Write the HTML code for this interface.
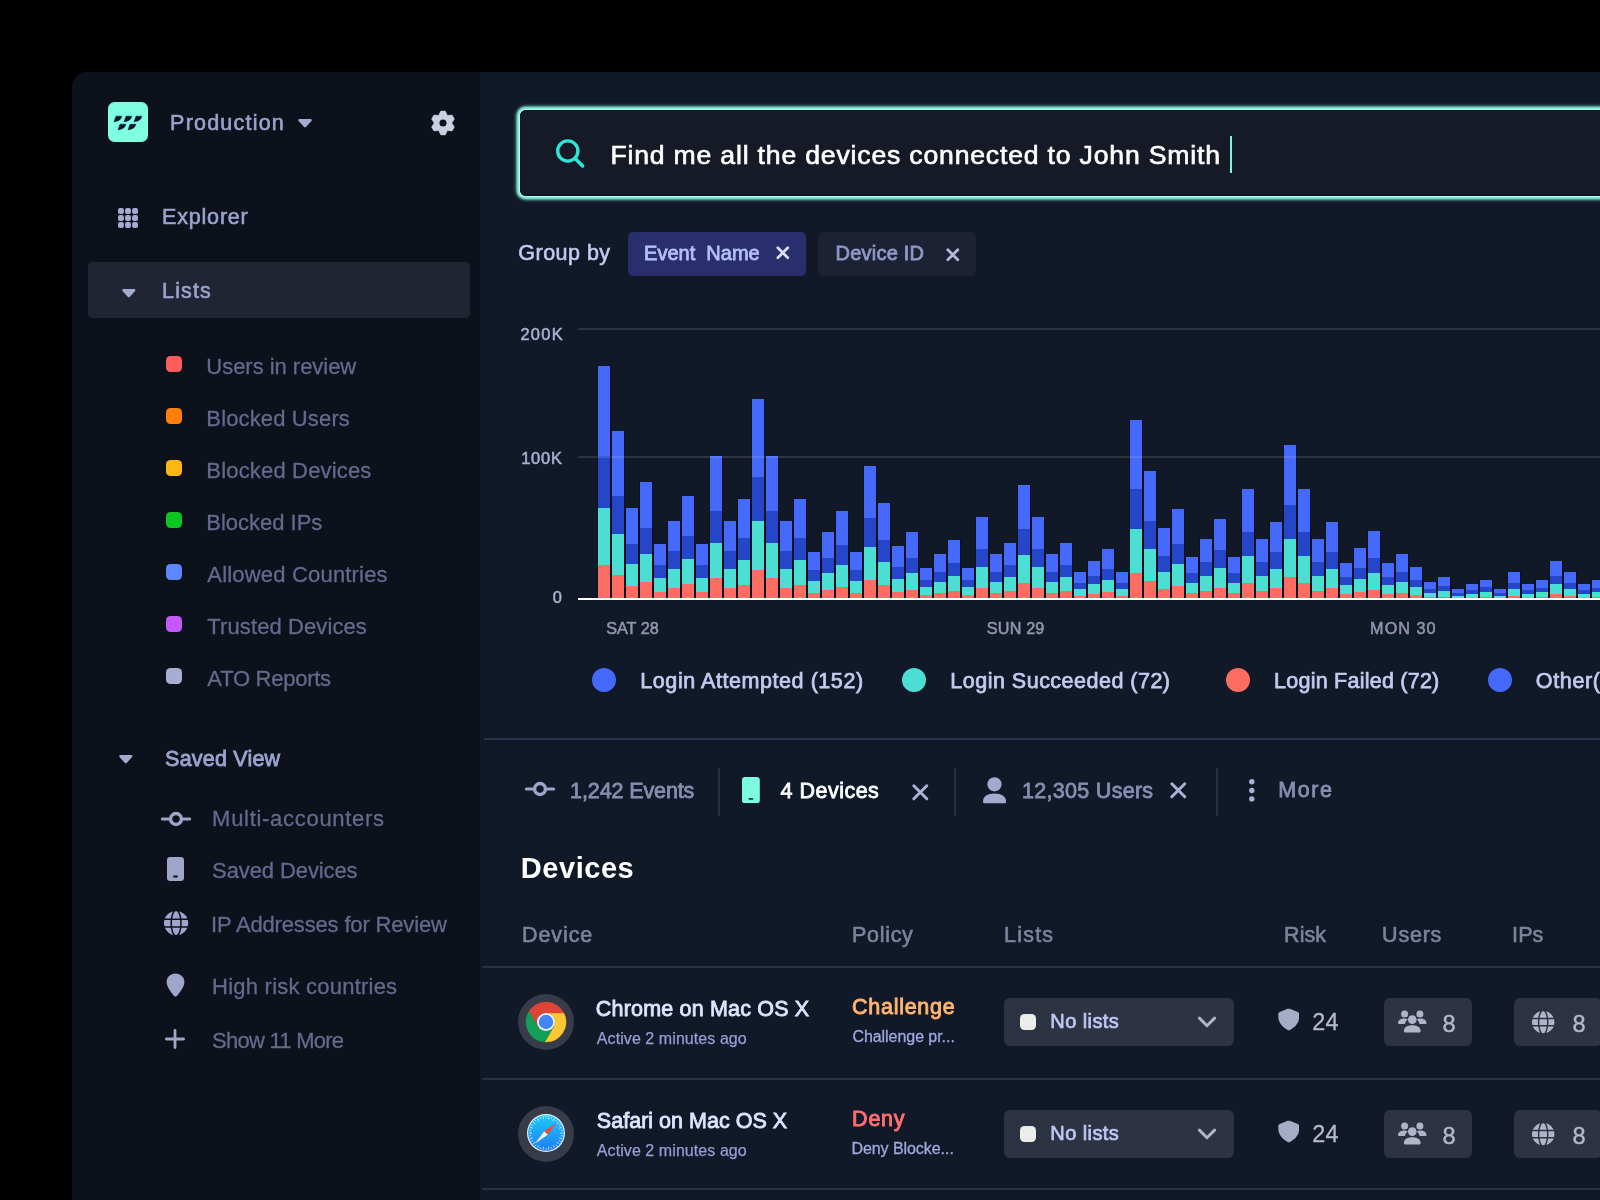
<!DOCTYPE html>
<html lang="en">
<head>
<meta charset="utf-8">
<title>Explorer – Devices</title>
<style>
html,body{margin:0;padding:0;background:#000;}
body{width:1600px;height:1200px;overflow:hidden;position:relative;font-family:"Liberation Sans", sans-serif;-webkit-font-smoothing:antialiased;}
.abs{position:absolute;display:block;}
.win{position:absolute;left:72px;top:72px;width:1600px;height:1200px;border-top-left-radius:16px;background:#111827;overflow:hidden;}
.side{position:absolute;left:0;top:0;width:408px;height:1200px;background:#0c111b;}
.txt{position:absolute;left:0;top:0;width:1600px;height:1200px;will-change:transform;}
.t{position:absolute;white-space:pre;font-family:"Liberation Sans", sans-serif;paint-order:stroke fill;}
</style>
</head>
<body>
<div class="win"><div class="side"></div></div>
<div class="abs" style="left:108px;top:102px;width:40px;height:40px;border-radius:6.5px;background:#80ffe0"></div>
<svg class="abs" style="left:108px;top:102px" width="40" height="40" viewBox="0 0 40 40" ><g fill="#0a1631" stroke="#0a1631" stroke-width="0.5" stroke-linejoin="round"><path d="M8.0 14.2 L13.9 14.2 Q12.6 19.3 6.0 19.8 Z"/><path d="M18.0 14.2 L23.9 14.2 Q22.6 19.3 16.0 19.8 Z"/><path d="M28.0 14.2 L33.9 14.2 Q32.6 19.3 26.0 19.8 Z"/><path d="M12.0 22.2 L17.9 22.2 Q16.6 27.3 10.0 27.8 Z"/><path d="M22.0 22.2 L27.9 22.2 Q26.6 27.3 20.0 27.8 Z"/></g></svg>
<svg class="abs" style="left:297.2px;top:118.2px" width="16" height="10.4" viewBox="-8.0 -5.2 16 10.4" ><path d="M-5.6 -3.0 L5.6 -3.0 L0 3.0 Z" fill="#a4abcf" stroke="#a4abcf" stroke-width="2.4" stroke-linejoin="round"/></svg>
<svg class="abs" style="left:429.4px;top:109.0px" width="28" height="28" viewBox="-14 -14 28 28" ><path d="M3.92 -8.60 L2.67 -11.13 Q2.60 -11.72 1.99 -11.88 L-1.99 -11.88 Q-2.60 -11.72 -2.67 -11.13 L-3.92 -8.60 Q-4.17 -7.23 -5.49 -7.69 L-5.49 -7.69 L-8.31 -7.88 Q-8.85 -8.11 -9.30 -7.66 L-11.29 -4.22 Q-11.44 -3.61 -10.98 -3.25 L-9.41 -0.91 Q-8.35 -0.00 -9.41 0.91 L-9.41 0.91 L-10.98 3.25 Q-11.44 3.61 -11.29 4.22 L-9.30 7.66 Q-8.85 8.11 -8.31 7.88 L-5.49 7.69 Q-4.18 7.23 -3.92 8.60 L-3.92 8.60 L-2.67 11.13 Q-2.60 11.72 -1.99 11.88 L1.99 11.88 Q2.60 11.72 2.67 11.13 L3.92 8.60 Q4.18 7.23 5.49 7.69 L5.49 7.69 L8.31 7.88 Q8.85 8.11 9.30 7.66 L11.29 4.22 Q11.44 3.61 10.98 3.25 L9.41 0.91 Q8.35 0.00 9.41 -0.91 L9.41 -0.91 L10.98 -3.25 Q11.44 -3.61 11.29 -4.22 L9.30 -7.66 Q8.85 -8.11 8.31 -7.88 L5.49 -7.69 Q4.17 -7.23 3.92 -8.60 Z" fill="#cbcfe1" stroke="#cbcfe1" stroke-width="0.5" stroke-linejoin="round"/><circle r="3.55" fill="#0c111b"/></svg>
<svg class="abs" style="left:118px;top:208px" width="20" height="20" viewBox="0 0 20 20" ><rect x="0.00" y="0.00" width="5.9" height="5.9" rx="1.9" fill="#a6acd0"/><rect x="7.05" y="0.00" width="5.9" height="5.9" rx="1.9" fill="#a6acd0"/><rect x="14.10" y="0.00" width="5.9" height="5.9" rx="1.9" fill="#a6acd0"/><rect x="0.00" y="7.05" width="5.9" height="5.9" rx="1.9" fill="#a6acd0"/><rect x="7.05" y="7.05" width="5.9" height="5.9" rx="1.9" fill="#a6acd0"/><rect x="14.10" y="7.05" width="5.9" height="5.9" rx="1.9" fill="#a6acd0"/><rect x="0.00" y="14.10" width="5.9" height="5.9" rx="1.9" fill="#a6acd0"/><rect x="7.05" y="14.10" width="5.9" height="5.9" rx="1.9" fill="#a6acd0"/><rect x="14.10" y="14.10" width="5.9" height="5.9" rx="1.9" fill="#a6acd0"/></svg>
<div class="abs" style="left:88px;top:262px;width:382px;height:56px;border-radius:4.5px;background:#212433"></div>
<svg class="abs" style="left:121.39999999999999px;top:288.0px" width="15.6" height="10.4" viewBox="-7.8 -5.2 15.6 10.4" ><path d="M-5.4 -3.0 L5.4 -3.0 L0 3.0 Z" fill="#a4abcf" stroke="#a4abcf" stroke-width="2.4" stroke-linejoin="round"/></svg>
<div class="abs" style="left:166px;top:356px;width:16px;height:16px;border-radius:4.5px;background:#ff5d5d"></div>
<div class="abs" style="left:166px;top:408px;width:16px;height:16px;border-radius:4.5px;background:#ff7f0a"></div>
<div class="abs" style="left:166px;top:460px;width:16px;height:16px;border-radius:4.5px;background:#ffb80f"></div>
<div class="abs" style="left:166px;top:512px;width:16px;height:16px;border-radius:4.5px;background:#0cc520"></div>
<div class="abs" style="left:166px;top:564px;width:16px;height:16px;border-radius:4.5px;background:#5e86ff"></div>
<div class="abs" style="left:166px;top:616px;width:16px;height:16px;border-radius:4.5px;background:#c558fb"></div>
<div class="abs" style="left:166px;top:668px;width:16px;height:16px;border-radius:4.5px;background:#a7aed2"></div>
<svg class="abs" style="left:118.4px;top:754.1999999999999px" width="15.6" height="10.4" viewBox="-7.8 -5.2 15.6 10.4" ><path d="M-5.4 -3.0 L5.4 -3.0 L0 3.0 Z" fill="#a4abcf" stroke="#a4abcf" stroke-width="2.4" stroke-linejoin="round"/></svg>
<svg class="abs" style="left:160px;top:809.8px" width="32" height="18" viewBox="-16 -9 32 18" ><path d="M-13.6 0 H-7 M7 0 H13.6" stroke="#a0a6c9" stroke-width="3.1" stroke-linecap="round"/><circle cx="0" cy="0" r="5.45" fill="none" stroke="#a0a6c9" stroke-width="3.4"/></svg>
<svg class="abs" style="left:167px;top:857px" width="17" height="24" viewBox="0 0 17 24" ><rect x="0" y="0" width="17" height="24" rx="3.2" fill="#a0a6c9"/><rect x="6.1" y="18.6" width="4.8" height="1.8" rx="0.7" fill="#0c111b"/></svg>
<svg class="abs" style="left:162.9px;top:909.6999999999999px" width="26.2" height="26.2" viewBox="-13.1 -13.1 26.2 26.2" ><circle cx="0" cy="0" r="12.1" fill="#a0a6c9"/><g fill="none" stroke="#0c111b" stroke-width="1.56"><ellipse cx="0" cy="0" rx="4.94" ry="12.90"/><path d="M-12.1 -3.93 H12.1 M-12.1 3.93 H12.1"/></g></svg>
<svg class="abs" style="left:166.1px;top:972.9px" width="19" height="25" viewBox="0 0 19 25" ><path d="M9.5 0.4 C4.4 0.4 0.6 4.2 0.6 9.1 C0.6 13.2 3.6 17.4 7.6 22.6 Q9.5 24.9 11.4 22.6 C15.4 17.4 18.4 13.2 18.4 9.1 C18.4 4.2 14.6 0.4 9.5 0.4 Z" fill="#a0a6c9"/></svg>
<svg class="abs" style="left:164.3px;top:1028px" width="22" height="22" viewBox="-11 -11 22 22" ><path d="M-8.6 0 H8.6 M0 -8.6 V8.6" stroke="#a0a6c9" stroke-width="2.8" stroke-linecap="round"/></svg>
<div class="abs" style="left:520px;top:110px;width:1200px;height:86px;border-radius:6px;background:#161a26;box-shadow:inset 0 0 0 1px #04161d, 0 0 0 1.1px #a6fff0, 0 0 2px 2.2px #8eeadb, 0 0 3.5px 4px rgba(125,232,212,0.7)"></div>
<svg class="abs" style="left:552px;top:135px" width="36" height="36" viewBox="552 135 36 36" ><circle cx="567.8" cy="151" r="10.1" fill="none" stroke="#2fe6d6" stroke-width="3.4"/><path d="M575.4 158.7 L582.6 165.9" stroke="#2fe6d6" stroke-width="3.6" stroke-linecap="round"/></svg>
<div class="abs" style="left:1230px;top:135.5px;width:2px;height:37px;background:#7ff3dc"></div>
<div class="abs" style="left:628px;top:232px;width:178px;height:44px;border-radius:5px;background:#282f6c"></div>
<div class="abs" style="left:818px;top:232px;width:158px;height:44px;border-radius:5px;background:#1c2133"></div>
<svg class="abs" style="left:775.4000000000001px;top:245.0px" width="15.6" height="15.6" viewBox="-7.8 -7.8 15.6 15.6" ><path d="M-5.0 -5.0 L5.0 5.0 M5.0 -5.0 L-5.0 5.0" stroke="#dde0ee" stroke-width="2.7" stroke-linecap="round" fill="none"/></svg>
<svg class="abs" style="left:945.2px;top:246.79999999999998px" width="15.6" height="15.6" viewBox="-7.8 -7.8 15.6 15.6" ><path d="M-5.0 -5.0 L5.0 5.0 M5.0 -5.0 L-5.0 5.0" stroke="#b3b9d8" stroke-width="2.8" stroke-linecap="round" fill="none"/></svg>
<svg class="abs" style="left:0;top:0" width="1600" height="700" viewBox="0 0 1600 700" shape-rendering="crispEdges">
<g fill="#0a0f1d"><rect x="597" y="365.75" width="14" height="234.25"/><rect x="611" y="431.25" width="14" height="168.75"/><rect x="625" y="508.00" width="14" height="92.00"/><rect x="639" y="482.25" width="14" height="117.75"/><rect x="653" y="543.75" width="14" height="56.25"/><rect x="667" y="520.75" width="14" height="79.25"/><rect x="681" y="496.25" width="14" height="103.75"/><rect x="695" y="543.75" width="14" height="56.25"/><rect x="709" y="455.50" width="14" height="144.50"/><rect x="723" y="520.75" width="14" height="79.25"/><rect x="737" y="499.00" width="14" height="101.00"/><rect x="751" y="399.25" width="14" height="200.75"/><rect x="765" y="455.50" width="14" height="144.50"/><rect x="779" y="520.75" width="14" height="79.25"/><rect x="793" y="499.00" width="14" height="101.00"/><rect x="807" y="551.50" width="14" height="48.50"/><rect x="821" y="532.25" width="14" height="67.75"/><rect x="835" y="510.50" width="14" height="89.50"/><rect x="849" y="551.50" width="14" height="48.50"/><rect x="863" y="465.75" width="14" height="134.25"/><rect x="877" y="503.00" width="14" height="97.00"/><rect x="891" y="546.25" width="14" height="53.75"/><rect x="905" y="532.25" width="14" height="67.75"/><rect x="919" y="568.00" width="14" height="32.00"/><rect x="933" y="554.00" width="14" height="46.00"/><rect x="947" y="540.00" width="14" height="60.00"/><rect x="961" y="568.00" width="14" height="32.00"/><rect x="975" y="517.00" width="14" height="83.00"/><rect x="989" y="554.00" width="14" height="46.00"/><rect x="1003" y="542.50" width="14" height="57.50"/><rect x="1017" y="485.00" width="14" height="115.00"/><rect x="1031" y="517.00" width="14" height="83.00"/><rect x="1045" y="554.00" width="14" height="46.00"/><rect x="1059" y="542.50" width="14" height="57.50"/><rect x="1073" y="572.00" width="14" height="28.00"/><rect x="1087" y="560.50" width="14" height="39.50"/><rect x="1101" y="549.00" width="14" height="51.00"/><rect x="1115" y="572.00" width="14" height="28.00"/><rect x="1129" y="420.00" width="14" height="180.00"/><rect x="1143" y="471.00" width="14" height="129.00"/><rect x="1157" y="528.25" width="14" height="71.75"/><rect x="1171" y="509.25" width="14" height="90.75"/><rect x="1185" y="556.50" width="14" height="43.50"/><rect x="1199" y="538.50" width="14" height="61.50"/><rect x="1213" y="519.25" width="14" height="80.75"/><rect x="1227" y="556.50" width="14" height="43.50"/><rect x="1241" y="489.00" width="14" height="111.00"/><rect x="1255" y="538.50" width="14" height="61.50"/><rect x="1269" y="522.00" width="14" height="78.00"/><rect x="1283" y="445.25" width="14" height="154.75"/><rect x="1297" y="489.00" width="14" height="111.00"/><rect x="1311" y="538.50" width="14" height="61.50"/><rect x="1325" y="522.00" width="14" height="78.00"/><rect x="1339" y="563.00" width="14" height="37.00"/><rect x="1353" y="547.50" width="14" height="52.50"/><rect x="1367" y="531.00" width="14" height="69.00"/><rect x="1381" y="563.00" width="14" height="37.00"/><rect x="1395" y="554.00" width="14" height="46.00"/><rect x="1409" y="566.75" width="14" height="33.25"/><rect x="1423" y="582.00" width="14" height="18.00"/><rect x="1437" y="577.00" width="14" height="23.00"/><rect x="1451" y="589.00" width="14" height="11.00"/><rect x="1465" y="584.25" width="14" height="15.75"/><rect x="1479" y="579.50" width="14" height="20.50"/><rect x="1493" y="589.00" width="14" height="11.00"/><rect x="1507" y="571.50" width="14" height="28.50"/><rect x="1521" y="584.25" width="14" height="15.75"/><rect x="1535" y="580.00" width="14" height="20.00"/><rect x="1549" y="560.50" width="14" height="39.50"/><rect x="1563" y="571.50" width="14" height="28.50"/><rect x="1577" y="584.25" width="14" height="15.75"/><rect x="1591" y="580.00" width="14" height="20.00"/></g>
<g><rect x="598" y="365.75" width="12" height="90.42" fill="#4569fb"/><rect x="598" y="456.17" width="12" height="51.54" fill="#2546c9"/><rect x="598" y="507.71" width="12" height="57.16" fill="#4bded3"/><rect x="598" y="564.86" width="12" height="35.14" fill="#fd6d61"/><rect x="612" y="431.25" width="12" height="65.14" fill="#4569fb"/><rect x="612" y="496.39" width="12" height="37.12" fill="#2546c9"/><rect x="612" y="533.51" width="12" height="41.17" fill="#4bded3"/><rect x="612" y="574.69" width="12" height="25.31" fill="#fd6d61"/><rect x="626" y="508.00" width="12" height="35.51" fill="#4569fb"/><rect x="626" y="543.51" width="12" height="20.24" fill="#2546c9"/><rect x="626" y="563.75" width="12" height="22.45" fill="#4bded3"/><rect x="626" y="586.20" width="12" height="13.80" fill="#fd6d61"/><rect x="640" y="482.25" width="12" height="45.45" fill="#4569fb"/><rect x="640" y="527.70" width="12" height="25.91" fill="#2546c9"/><rect x="640" y="553.61" width="12" height="28.73" fill="#4bded3"/><rect x="640" y="582.34" width="12" height="17.66" fill="#fd6d61"/><rect x="654" y="543.75" width="12" height="21.71" fill="#4569fb"/><rect x="654" y="565.46" width="12" height="12.38" fill="#2546c9"/><rect x="654" y="577.84" width="12" height="13.72" fill="#4bded3"/><rect x="654" y="591.56" width="12" height="8.44" fill="#fd6d61"/><rect x="668" y="520.75" width="12" height="30.59" fill="#4569fb"/><rect x="668" y="551.34" width="12" height="17.43" fill="#2546c9"/><rect x="668" y="568.78" width="12" height="19.34" fill="#4bded3"/><rect x="668" y="588.11" width="12" height="11.89" fill="#fd6d61"/><rect x="682" y="496.25" width="12" height="40.05" fill="#4569fb"/><rect x="682" y="536.30" width="12" height="22.82" fill="#2546c9"/><rect x="682" y="559.12" width="12" height="25.31" fill="#4bded3"/><rect x="682" y="584.44" width="12" height="15.56" fill="#fd6d61"/><rect x="696" y="543.75" width="12" height="21.71" fill="#4569fb"/><rect x="696" y="565.46" width="12" height="12.38" fill="#2546c9"/><rect x="696" y="577.84" width="12" height="13.72" fill="#4bded3"/><rect x="696" y="591.56" width="12" height="8.44" fill="#fd6d61"/><rect x="710" y="455.50" width="12" height="55.78" fill="#4569fb"/><rect x="710" y="511.28" width="12" height="31.79" fill="#2546c9"/><rect x="710" y="543.07" width="12" height="35.26" fill="#4bded3"/><rect x="710" y="578.33" width="12" height="21.67" fill="#fd6d61"/><rect x="724" y="520.75" width="12" height="30.59" fill="#4569fb"/><rect x="724" y="551.34" width="12" height="17.43" fill="#2546c9"/><rect x="724" y="568.78" width="12" height="19.34" fill="#4bded3"/><rect x="724" y="588.11" width="12" height="11.89" fill="#fd6d61"/><rect x="738" y="499.00" width="12" height="38.99" fill="#4569fb"/><rect x="738" y="537.99" width="12" height="22.22" fill="#2546c9"/><rect x="738" y="560.21" width="12" height="24.64" fill="#4bded3"/><rect x="738" y="584.85" width="12" height="15.15" fill="#fd6d61"/><rect x="752" y="399.25" width="12" height="77.49" fill="#4569fb"/><rect x="752" y="476.74" width="12" height="44.16" fill="#2546c9"/><rect x="752" y="520.90" width="12" height="48.98" fill="#4bded3"/><rect x="752" y="569.89" width="12" height="30.11" fill="#fd6d61"/><rect x="766" y="455.50" width="12" height="55.78" fill="#4569fb"/><rect x="766" y="511.28" width="12" height="31.79" fill="#2546c9"/><rect x="766" y="543.07" width="12" height="35.26" fill="#4bded3"/><rect x="766" y="578.33" width="12" height="21.67" fill="#fd6d61"/><rect x="780" y="520.75" width="12" height="30.59" fill="#4569fb"/><rect x="780" y="551.34" width="12" height="17.43" fill="#2546c9"/><rect x="780" y="568.78" width="12" height="19.34" fill="#4bded3"/><rect x="780" y="588.11" width="12" height="11.89" fill="#fd6d61"/><rect x="794" y="499.00" width="12" height="38.99" fill="#4569fb"/><rect x="794" y="537.99" width="12" height="22.22" fill="#2546c9"/><rect x="794" y="560.21" width="12" height="24.64" fill="#4bded3"/><rect x="794" y="584.85" width="12" height="15.15" fill="#fd6d61"/><rect x="808" y="551.50" width="12" height="18.72" fill="#4569fb"/><rect x="808" y="570.22" width="12" height="10.67" fill="#2546c9"/><rect x="808" y="580.89" width="12" height="11.83" fill="#4bded3"/><rect x="808" y="592.72" width="12" height="7.28" fill="#fd6d61"/><rect x="822" y="532.25" width="12" height="26.15" fill="#4569fb"/><rect x="822" y="558.40" width="12" height="14.90" fill="#2546c9"/><rect x="822" y="573.31" width="12" height="16.53" fill="#4bded3"/><rect x="822" y="589.84" width="12" height="10.16" fill="#fd6d61"/><rect x="836" y="510.50" width="12" height="34.55" fill="#4569fb"/><rect x="836" y="545.05" width="12" height="19.69" fill="#2546c9"/><rect x="836" y="564.74" width="12" height="21.84" fill="#4bded3"/><rect x="836" y="586.58" width="12" height="13.42" fill="#fd6d61"/><rect x="850" y="551.50" width="12" height="18.72" fill="#4569fb"/><rect x="850" y="570.22" width="12" height="10.67" fill="#2546c9"/><rect x="850" y="580.89" width="12" height="11.83" fill="#4bded3"/><rect x="850" y="592.72" width="12" height="7.28" fill="#fd6d61"/><rect x="864" y="465.75" width="12" height="51.82" fill="#4569fb"/><rect x="864" y="517.57" width="12" height="29.54" fill="#2546c9"/><rect x="864" y="547.11" width="12" height="32.76" fill="#4bded3"/><rect x="864" y="579.86" width="12" height="20.14" fill="#fd6d61"/><rect x="878" y="503.00" width="12" height="37.44" fill="#4569fb"/><rect x="878" y="540.44" width="12" height="21.34" fill="#2546c9"/><rect x="878" y="561.78" width="12" height="23.67" fill="#4bded3"/><rect x="878" y="585.45" width="12" height="14.55" fill="#fd6d61"/><rect x="892" y="546.25" width="12" height="20.75" fill="#4569fb"/><rect x="892" y="567.00" width="12" height="11.82" fill="#2546c9"/><rect x="892" y="578.82" width="12" height="13.12" fill="#4bded3"/><rect x="892" y="591.94" width="12" height="8.06" fill="#fd6d61"/><rect x="906" y="532.25" width="12" height="26.15" fill="#4569fb"/><rect x="906" y="558.40" width="12" height="14.90" fill="#2546c9"/><rect x="906" y="573.31" width="12" height="16.53" fill="#4bded3"/><rect x="906" y="589.84" width="12" height="10.16" fill="#fd6d61"/><rect x="920" y="568.00" width="12" height="12.35" fill="#4569fb"/><rect x="920" y="580.35" width="12" height="7.04" fill="#2546c9"/><rect x="920" y="587.39" width="12" height="7.81" fill="#4bded3"/><rect x="920" y="595.20" width="12" height="4.80" fill="#fd6d61"/><rect x="934" y="554.00" width="12" height="17.76" fill="#4569fb"/><rect x="934" y="571.76" width="12" height="10.12" fill="#2546c9"/><rect x="934" y="581.88" width="12" height="11.22" fill="#4bded3"/><rect x="934" y="593.10" width="12" height="6.90" fill="#fd6d61"/><rect x="948" y="540.00" width="12" height="23.16" fill="#4569fb"/><rect x="948" y="563.16" width="12" height="13.20" fill="#2546c9"/><rect x="948" y="576.36" width="12" height="14.64" fill="#4bded3"/><rect x="948" y="591.00" width="12" height="9.00" fill="#fd6d61"/><rect x="962" y="568.00" width="12" height="12.35" fill="#4569fb"/><rect x="962" y="580.35" width="12" height="7.04" fill="#2546c9"/><rect x="962" y="587.39" width="12" height="7.81" fill="#4bded3"/><rect x="962" y="595.20" width="12" height="4.80" fill="#fd6d61"/><rect x="976" y="517.00" width="12" height="32.04" fill="#4569fb"/><rect x="976" y="549.04" width="12" height="18.26" fill="#2546c9"/><rect x="976" y="567.30" width="12" height="20.25" fill="#4bded3"/><rect x="976" y="587.55" width="12" height="12.45" fill="#fd6d61"/><rect x="990" y="554.00" width="12" height="17.76" fill="#4569fb"/><rect x="990" y="571.76" width="12" height="10.12" fill="#2546c9"/><rect x="990" y="581.88" width="12" height="11.22" fill="#4bded3"/><rect x="990" y="593.10" width="12" height="6.90" fill="#fd6d61"/><rect x="1004" y="542.50" width="12" height="22.20" fill="#4569fb"/><rect x="1004" y="564.70" width="12" height="12.65" fill="#2546c9"/><rect x="1004" y="577.35" width="12" height="14.03" fill="#4bded3"/><rect x="1004" y="591.38" width="12" height="8.63" fill="#fd6d61"/><rect x="1018" y="485.00" width="12" height="44.39" fill="#4569fb"/><rect x="1018" y="529.39" width="12" height="25.30" fill="#2546c9"/><rect x="1018" y="554.69" width="12" height="28.06" fill="#4bded3"/><rect x="1018" y="582.75" width="12" height="17.25" fill="#fd6d61"/><rect x="1032" y="517.00" width="12" height="32.04" fill="#4569fb"/><rect x="1032" y="549.04" width="12" height="18.26" fill="#2546c9"/><rect x="1032" y="567.30" width="12" height="20.25" fill="#4bded3"/><rect x="1032" y="587.55" width="12" height="12.45" fill="#fd6d61"/><rect x="1046" y="554.00" width="12" height="17.76" fill="#4569fb"/><rect x="1046" y="571.76" width="12" height="10.12" fill="#2546c9"/><rect x="1046" y="581.88" width="12" height="11.22" fill="#4bded3"/><rect x="1046" y="593.10" width="12" height="6.90" fill="#fd6d61"/><rect x="1060" y="542.50" width="12" height="22.20" fill="#4569fb"/><rect x="1060" y="564.70" width="12" height="12.65" fill="#2546c9"/><rect x="1060" y="577.35" width="12" height="14.03" fill="#4bded3"/><rect x="1060" y="591.38" width="12" height="8.63" fill="#fd6d61"/><rect x="1074" y="572.00" width="12" height="10.81" fill="#4569fb"/><rect x="1074" y="582.81" width="12" height="6.16" fill="#2546c9"/><rect x="1074" y="588.97" width="12" height="6.83" fill="#4bded3"/><rect x="1074" y="595.80" width="12" height="4.20" fill="#fd6d61"/><rect x="1088" y="560.50" width="12" height="15.25" fill="#4569fb"/><rect x="1088" y="575.75" width="12" height="8.69" fill="#2546c9"/><rect x="1088" y="584.44" width="12" height="9.64" fill="#4bded3"/><rect x="1088" y="594.08" width="12" height="5.93" fill="#fd6d61"/><rect x="1102" y="549.00" width="12" height="19.69" fill="#4569fb"/><rect x="1102" y="568.69" width="12" height="11.22" fill="#2546c9"/><rect x="1102" y="579.91" width="12" height="12.44" fill="#4bded3"/><rect x="1102" y="592.35" width="12" height="7.65" fill="#fd6d61"/><rect x="1116" y="572.00" width="12" height="10.81" fill="#4569fb"/><rect x="1116" y="582.81" width="12" height="6.16" fill="#2546c9"/><rect x="1116" y="588.97" width="12" height="6.83" fill="#4bded3"/><rect x="1116" y="595.80" width="12" height="4.20" fill="#fd6d61"/><rect x="1130" y="420.00" width="12" height="69.48" fill="#4569fb"/><rect x="1130" y="489.48" width="12" height="39.60" fill="#2546c9"/><rect x="1130" y="529.08" width="12" height="43.92" fill="#4bded3"/><rect x="1130" y="573.00" width="12" height="27.00" fill="#fd6d61"/><rect x="1144" y="471.00" width="12" height="49.79" fill="#4569fb"/><rect x="1144" y="520.79" width="12" height="28.38" fill="#2546c9"/><rect x="1144" y="549.17" width="12" height="31.48" fill="#4bded3"/><rect x="1144" y="580.65" width="12" height="19.35" fill="#fd6d61"/><rect x="1158" y="528.25" width="12" height="27.70" fill="#4569fb"/><rect x="1158" y="555.95" width="12" height="15.79" fill="#2546c9"/><rect x="1158" y="571.73" width="12" height="17.51" fill="#4bded3"/><rect x="1158" y="589.24" width="12" height="10.76" fill="#fd6d61"/><rect x="1172" y="509.25" width="12" height="35.03" fill="#4569fb"/><rect x="1172" y="544.28" width="12" height="19.96" fill="#2546c9"/><rect x="1172" y="564.24" width="12" height="22.14" fill="#4bded3"/><rect x="1172" y="586.39" width="12" height="13.61" fill="#fd6d61"/><rect x="1186" y="556.50" width="12" height="16.79" fill="#4569fb"/><rect x="1186" y="573.29" width="12" height="9.57" fill="#2546c9"/><rect x="1186" y="582.86" width="12" height="10.61" fill="#4bded3"/><rect x="1186" y="593.48" width="12" height="6.53" fill="#fd6d61"/><rect x="1200" y="538.50" width="12" height="23.74" fill="#4569fb"/><rect x="1200" y="562.24" width="12" height="13.53" fill="#2546c9"/><rect x="1200" y="575.77" width="12" height="15.01" fill="#4bded3"/><rect x="1200" y="590.77" width="12" height="9.22" fill="#fd6d61"/><rect x="1214" y="519.25" width="12" height="31.17" fill="#4569fb"/><rect x="1214" y="550.42" width="12" height="17.77" fill="#2546c9"/><rect x="1214" y="568.18" width="12" height="19.70" fill="#4bded3"/><rect x="1214" y="587.89" width="12" height="12.11" fill="#fd6d61"/><rect x="1228" y="556.50" width="12" height="16.79" fill="#4569fb"/><rect x="1228" y="573.29" width="12" height="9.57" fill="#2546c9"/><rect x="1228" y="582.86" width="12" height="10.61" fill="#4bded3"/><rect x="1228" y="593.48" width="12" height="6.53" fill="#fd6d61"/><rect x="1242" y="489.00" width="12" height="42.85" fill="#4569fb"/><rect x="1242" y="531.85" width="12" height="24.42" fill="#2546c9"/><rect x="1242" y="556.27" width="12" height="27.08" fill="#4bded3"/><rect x="1242" y="583.35" width="12" height="16.65" fill="#fd6d61"/><rect x="1256" y="538.50" width="12" height="23.74" fill="#4569fb"/><rect x="1256" y="562.24" width="12" height="13.53" fill="#2546c9"/><rect x="1256" y="575.77" width="12" height="15.01" fill="#4bded3"/><rect x="1256" y="590.77" width="12" height="9.22" fill="#fd6d61"/><rect x="1270" y="522.00" width="12" height="30.11" fill="#4569fb"/><rect x="1270" y="552.11" width="12" height="17.16" fill="#2546c9"/><rect x="1270" y="569.27" width="12" height="19.03" fill="#4bded3"/><rect x="1270" y="588.30" width="12" height="11.70" fill="#fd6d61"/><rect x="1284" y="445.25" width="12" height="59.73" fill="#4569fb"/><rect x="1284" y="504.98" width="12" height="34.05" fill="#2546c9"/><rect x="1284" y="539.03" width="12" height="37.76" fill="#4bded3"/><rect x="1284" y="576.79" width="12" height="23.21" fill="#fd6d61"/><rect x="1298" y="489.00" width="12" height="42.85" fill="#4569fb"/><rect x="1298" y="531.85" width="12" height="24.42" fill="#2546c9"/><rect x="1298" y="556.27" width="12" height="27.08" fill="#4bded3"/><rect x="1298" y="583.35" width="12" height="16.65" fill="#fd6d61"/><rect x="1312" y="538.50" width="12" height="23.74" fill="#4569fb"/><rect x="1312" y="562.24" width="12" height="13.53" fill="#2546c9"/><rect x="1312" y="575.77" width="12" height="15.01" fill="#4bded3"/><rect x="1312" y="590.77" width="12" height="9.22" fill="#fd6d61"/><rect x="1326" y="522.00" width="12" height="30.11" fill="#4569fb"/><rect x="1326" y="552.11" width="12" height="17.16" fill="#2546c9"/><rect x="1326" y="569.27" width="12" height="19.03" fill="#4bded3"/><rect x="1326" y="588.30" width="12" height="11.70" fill="#fd6d61"/><rect x="1340" y="563.00" width="12" height="14.28" fill="#4569fb"/><rect x="1340" y="577.28" width="12" height="8.14" fill="#2546c9"/><rect x="1340" y="585.42" width="12" height="9.03" fill="#4bded3"/><rect x="1340" y="594.45" width="12" height="5.55" fill="#fd6d61"/><rect x="1354" y="547.50" width="12" height="20.27" fill="#4569fb"/><rect x="1354" y="567.76" width="12" height="11.55" fill="#2546c9"/><rect x="1354" y="579.31" width="12" height="12.81" fill="#4bded3"/><rect x="1354" y="592.12" width="12" height="7.87" fill="#fd6d61"/><rect x="1368" y="531.00" width="12" height="26.63" fill="#4569fb"/><rect x="1368" y="557.63" width="12" height="15.18" fill="#2546c9"/><rect x="1368" y="572.81" width="12" height="16.84" fill="#4bded3"/><rect x="1368" y="589.65" width="12" height="10.35" fill="#fd6d61"/><rect x="1382" y="563.00" width="12" height="14.28" fill="#4569fb"/><rect x="1382" y="577.28" width="12" height="8.14" fill="#2546c9"/><rect x="1382" y="585.42" width="12" height="9.03" fill="#4bded3"/><rect x="1382" y="594.45" width="12" height="5.55" fill="#fd6d61"/><rect x="1396" y="554.00" width="12" height="17.76" fill="#4569fb"/><rect x="1396" y="571.76" width="12" height="10.12" fill="#2546c9"/><rect x="1396" y="581.88" width="12" height="11.22" fill="#4bded3"/><rect x="1396" y="593.10" width="12" height="6.90" fill="#fd6d61"/><rect x="1410" y="566.75" width="12" height="12.83" fill="#4569fb"/><rect x="1410" y="579.58" width="12" height="7.32" fill="#2546c9"/><rect x="1410" y="586.90" width="12" height="8.11" fill="#4bded3"/><rect x="1410" y="595.01" width="12" height="4.99" fill="#fd6d61"/><rect x="1424" y="582.00" width="12" height="6.95" fill="#4569fb"/><rect x="1424" y="588.95" width="12" height="3.96" fill="#2546c9"/><rect x="1424" y="592.91" width="12" height="4.39" fill="#4bded3"/><rect x="1424" y="597.30" width="12" height="2.70" fill="#fd6d61"/><rect x="1438" y="577.00" width="12" height="8.88" fill="#4569fb"/><rect x="1438" y="585.88" width="12" height="5.06" fill="#2546c9"/><rect x="1438" y="590.94" width="12" height="5.61" fill="#4bded3"/><rect x="1438" y="596.55" width="12" height="3.45" fill="#fd6d61"/><rect x="1452" y="589.00" width="12" height="4.25" fill="#4569fb"/><rect x="1452" y="593.25" width="12" height="2.42" fill="#2546c9"/><rect x="1452" y="595.67" width="12" height="2.68" fill="#4bded3"/><rect x="1452" y="598.35" width="12" height="1.65" fill="#fd6d61"/><rect x="1466" y="584.25" width="12" height="6.08" fill="#4569fb"/><rect x="1466" y="590.33" width="12" height="3.46" fill="#2546c9"/><rect x="1466" y="593.79" width="12" height="3.84" fill="#4bded3"/><rect x="1466" y="597.64" width="12" height="2.36" fill="#fd6d61"/><rect x="1480" y="579.50" width="12" height="7.91" fill="#4569fb"/><rect x="1480" y="587.41" width="12" height="4.51" fill="#2546c9"/><rect x="1480" y="591.92" width="12" height="5.00" fill="#4bded3"/><rect x="1480" y="596.92" width="12" height="3.08" fill="#fd6d61"/><rect x="1494" y="589.00" width="12" height="4.25" fill="#4569fb"/><rect x="1494" y="593.25" width="12" height="2.42" fill="#2546c9"/><rect x="1494" y="595.67" width="12" height="2.68" fill="#4bded3"/><rect x="1494" y="598.35" width="12" height="1.65" fill="#fd6d61"/><rect x="1508" y="571.50" width="12" height="11.00" fill="#4569fb"/><rect x="1508" y="582.50" width="12" height="6.27" fill="#2546c9"/><rect x="1508" y="588.77" width="12" height="6.95" fill="#4bded3"/><rect x="1508" y="595.72" width="12" height="4.28" fill="#fd6d61"/><rect x="1522" y="584.25" width="12" height="6.08" fill="#4569fb"/><rect x="1522" y="590.33" width="12" height="3.46" fill="#2546c9"/><rect x="1522" y="593.79" width="12" height="3.84" fill="#4bded3"/><rect x="1522" y="597.64" width="12" height="2.36" fill="#fd6d61"/><rect x="1536" y="580.00" width="12" height="7.72" fill="#4569fb"/><rect x="1536" y="587.72" width="12" height="4.40" fill="#2546c9"/><rect x="1536" y="592.12" width="12" height="4.88" fill="#4bded3"/><rect x="1536" y="597.00" width="12" height="3.00" fill="#fd6d61"/><rect x="1550" y="560.50" width="12" height="15.25" fill="#4569fb"/><rect x="1550" y="575.75" width="12" height="8.69" fill="#2546c9"/><rect x="1550" y="584.44" width="12" height="9.64" fill="#4bded3"/><rect x="1550" y="594.08" width="12" height="5.93" fill="#fd6d61"/><rect x="1564" y="571.50" width="12" height="11.00" fill="#4569fb"/><rect x="1564" y="582.50" width="12" height="6.27" fill="#2546c9"/><rect x="1564" y="588.77" width="12" height="6.95" fill="#4bded3"/><rect x="1564" y="595.72" width="12" height="4.28" fill="#fd6d61"/><rect x="1578" y="584.25" width="12" height="6.08" fill="#4569fb"/><rect x="1578" y="590.33" width="12" height="3.46" fill="#2546c9"/><rect x="1578" y="593.79" width="12" height="3.84" fill="#4bded3"/><rect x="1578" y="597.64" width="12" height="2.36" fill="#fd6d61"/><rect x="1592" y="580.00" width="12" height="7.72" fill="#4569fb"/><rect x="1592" y="587.72" width="12" height="4.40" fill="#2546c9"/><rect x="1592" y="592.12" width="12" height="4.88" fill="#4bded3"/><rect x="1592" y="597.00" width="12" height="3.00" fill="#fd6d61"/></g>
<rect x="578" y="328" width="1022" height="2" fill="#ffffff" opacity="0.115"/>
<rect x="578" y="456" width="1022" height="2" fill="#ffffff" opacity="0.115"/>
<rect x="578" y="597.75" width="1022" height="2.25" fill="#ffffff"/>
</svg>
<div class="abs" style="left:592px;top:668px;width:24px;height:24px;border-radius:50%;background:#4569fb"></div>
<div class="abs" style="left:902px;top:668px;width:24px;height:24px;border-radius:50%;background:#4bded3"></div>
<div class="abs" style="left:1226px;top:668px;width:24px;height:24px;border-radius:50%;background:#fd6d61"></div>
<div class="abs" style="left:1488px;top:668px;width:24px;height:24px;border-radius:50%;background:#4569fb"></div>
<div class="abs" style="left:484px;top:738px;width:1116px;height:1.6px;background:#2c304c"></div>
<div class="abs" style="left:718.3000000000001px;top:768px;width:2px;height:47.5px;background:#282d41"></div>
<div class="abs" style="left:954.1px;top:768px;width:2px;height:47.5px;background:#282d41"></div>
<div class="abs" style="left:1216.1000000000001px;top:768px;width:2px;height:47.5px;background:#282d41"></div>
<svg class="abs" style="left:524px;top:779.8px" width="32" height="18" viewBox="-16 -9 32 18" ><path d="M-13.6 0 H-7 M7 0 H13.6" stroke="#9ea5cb" stroke-width="3.1" stroke-linecap="round"/><circle cx="0" cy="0" r="5.45" fill="none" stroke="#9ea5cb" stroke-width="3.4"/></svg>
<svg class="abs" style="left:742.2px;top:777px" width="17.8" height="26.4" viewBox="0 0 17.8 26.4" ><rect x="0" y="0" width="17.8" height="26.4" rx="3.2" fill="#7dfde0"/><rect x="6.5" y="21.0" width="4.8" height="1.8" rx="0.7" fill="#0f3a36"/></svg>
<svg class="abs" style="left:910.7px;top:783.2px" width="18.6" height="18.6" viewBox="-9.3 -9.3 18.6 18.6" ><path d="M-6.5 -6.5 L6.5 6.5 M6.5 -6.5 L-6.5 6.5" stroke="#aab1d6" stroke-width="3.0" stroke-linecap="round" fill="none"/></svg>
<svg class="abs" style="left:982.5px;top:777px" width="23" height="26.5" viewBox="0 0 23 26.5" ><circle cx="11.5" cy="7.3" r="7.1" fill="#a3aace"/><path d="M0 24.4 C0 19.6 4.6 16.6 11.5 16.6 C18.4 16.6 23 19.6 23 24.4 V25 Q23 26.3 21.7 26.3 H1.3 Q0 26.3 0 25 Z" fill="#a3aace"/></svg>
<svg class="abs" style="left:1168.7px;top:781.3000000000001px" width="18.6" height="18.6" viewBox="-9.3 -9.3 18.6 18.6" ><path d="M-6.5 -6.5 L6.5 6.5 M6.5 -6.5 L-6.5 6.5" stroke="#aab1d6" stroke-width="3.0" stroke-linecap="round" fill="none"/></svg>
<svg class="abs" style="left:1248px;top:778px" width="8" height="26" viewBox="0 0 8 26" ><circle cx="3.8" cy="3.8" r="2.7" fill="#aab1d6"/><circle cx="3.8" cy="12.5" r="2.7" fill="#aab1d6"/><circle cx="3.8" cy="20.9" r="2.7" fill="#aab1d6"/></svg>
<div class="abs" style="left:482px;top:966.4px;width:1118px;height:1.6px;background:#2b3042"></div>
<div class="abs" style="left:482px;top:1078.2px;width:1118px;height:1.6px;background:#2b3042"></div>
<div class="abs" style="left:482px;top:1188.2px;width:1118px;height:1.6px;background:#2b3042"></div>
<div class="abs" style="left:518px;top:994px;width:56px;height:56px;border-radius:50%;background:#383c49"></div>
<svg class="abs" style="left:525.1px;top:1001px" width="42" height="42" viewBox="-21 -21 42 42" ><path d="M0.00 -9.00 L17.86 -9.00 A20 20 0 0 1 -1.14 19.97 L7.79 4.50 A9.00 9.00 0 0 0 0.00 -9.00 Z" fill="#fdc733" stroke="#fdc733" stroke-width="0.3"/><path d="M7.79 4.50 L-1.14 19.97 A20 20 0 0 1 -16.72 -10.97 L-7.79 4.50 A9.00 9.00 0 0 0 7.79 4.50 Z" fill="#11a055" stroke="#11a055" stroke-width="0.3"/><path d="M-7.79 4.50 L-16.72 -10.97 A20 20 0 0 1 17.86 -9.00 L0.00 -9.00 A9.00 9.00 0 0 0 -7.79 4.50 Z" fill="#df4534" stroke="#df4534" stroke-width="0.3"/><circle r="9.00" fill="#f4f6fb"/><circle r="7.24" fill="#4285f4"/></svg>
<div class="abs" style="left:1004px;top:998px;width:230px;height:48px;border-radius:6px;background:#2e3343"></div>
<div class="abs" style="left:1020px;top:1014px;width:16px;height:16px;border-radius:4.5px;background:#ecedeb"></div>
<svg class="abs" style="left:1196.2px;top:1013.9px" width="22" height="16" viewBox="-11 -8 22 16" ><path d="M-7.6 -3.9 L0 3.7 L7.6 -3.9" stroke="#b0b5c8" stroke-width="2.9" stroke-linecap="round" stroke-linejoin="round" fill="none"/></svg>
<svg class="abs" style="left:1277.7px;top:1008.4px" width="21.5" height="23" viewBox="0 0 21.5 23" ><path d="M9.7 0.85 Q10.75 0.4 11.8 0.85 L19.8 3.9 Q21.2 4.5 21.2 6 V8.6 C21.2 14.6 17.3 19.4 10.75 22.5 C4.2 19.4 0.3 14.6 0.3 8.6 V6 Q0.3 4.5 1.7 3.9 Z" fill="#a6abc6"/></svg>
<div class="abs" style="left:1384px;top:998px;width:88px;height:48px;border-radius:6px;background:#2e3343"></div>
<svg class="abs" style="left:1398px;top:1010.4px" width="28.5" height="22.5" viewBox="0 0 28.5 22.5" ><circle cx="6.6" cy="3.9" r="3.5" fill="#b0b5ca"/><circle cx="21.9" cy="3.9" r="3.5" fill="#b0b5ca"/><path d="M0 13.2 C0 10.4 2.6 8.6 6.2 8.6 C7.6 8.6 8.8 8.9 9.8 9.4 C8.2 10.6 7.2 12.2 6.9 14 H0.9 Q0 14 0 13.2 Z" fill="#b0b5ca"/><path d="M28.5 13.2 C28.5 10.4 25.9 8.6 22.3 8.6 C20.9 8.6 19.7 8.9 18.7 9.4 C20.3 10.6 21.3 12.2 21.6 14 H27.6 Q28.5 14 28.5 13.2 Z" fill="#b0b5ca"/><circle cx="14.25" cy="9.6" r="4.3" fill="#b0b5ca"/><path d="M5.9 20.6 C5.9 17.4 9.4 15.2 14.25 15.2 C19.1 15.2 22.6 17.4 22.6 20.6 V21.3 Q22.6 22.4 21.5 22.4 H7 Q5.9 22.4 5.9 21.3 Z" fill="#b0b5ca"/></svg>
<div class="abs" style="left:1514px;top:998px;width:88px;height:48px;border-radius:6px;background:#2e3343"></div>
<svg class="abs" style="left:1530.6px;top:1009.5999999999999px" width="24.4" height="24.4" viewBox="-12.2 -12.2 24.4 24.4" ><circle cx="0" cy="0" r="11.2" fill="#b0b5ca"/><g fill="none" stroke="#2e3343" stroke-width="1.45"><ellipse cx="0" cy="0" rx="4.57" ry="12.00"/><path d="M-11.2 -3.64 H11.2 M-11.2 3.64 H11.2"/></g></svg>
<div class="abs" style="left:518px;top:1106px;width:56px;height:56px;border-radius:50%;background:#383c49"></div>
<svg class="abs" style="left:526.0px;top:1113.0px" width="40.0" height="40.0" viewBox="-20.0 -20.0 40.0 40.0" ><defs><linearGradient id="sg" x1="0" y1="0" x2="0" y2="1"><stop offset="0" stop-color="#1ccbfb"/><stop offset="1" stop-color="#1f7df0"/></linearGradient></defs><circle r="19.0" fill="#eef2f7"/><circle r="17.85" fill="url(#sg)"/><path d="M16.80 0.00 L14.00 0.00 M16.54 2.92 L14.97 2.64 M15.79 5.75 L13.16 4.79 M14.55 8.40 L13.16 7.60 M12.87 10.80 L10.72 9.00 M10.80 12.87 L9.77 11.64 M8.40 14.55 L7.00 12.12 M5.75 15.79 L5.20 14.28 M2.92 16.54 L2.43 13.79 M0.00 16.80 L0.00 15.20 M-2.92 16.54 L-2.43 13.79 M-5.75 15.79 L-5.20 14.28 M-8.40 14.55 L-7.00 12.12 M-10.80 12.87 L-9.77 11.64 M-12.87 10.80 L-10.72 9.00 M-14.55 8.40 L-13.16 7.60 M-15.79 5.75 L-13.16 4.79 M-16.54 2.92 L-14.97 2.64 M-16.80 0.00 L-14.00 0.00 M-16.54 -2.92 L-14.97 -2.64 M-15.79 -5.75 L-13.16 -4.79 M-14.55 -8.40 L-13.16 -7.60 M-12.87 -10.80 L-10.72 -9.00 M-10.80 -12.87 L-9.77 -11.64 M-8.40 -14.55 L-7.00 -12.12 M-5.75 -15.79 L-5.20 -14.28 M-2.92 -16.54 L-2.43 -13.79 M-0.00 -16.80 L-0.00 -15.20 M2.92 -16.54 L2.43 -13.79 M5.75 -15.79 L5.20 -14.28 M8.40 -14.55 L7.00 -12.12 M10.80 -12.87 L9.77 -11.64 M12.87 -10.80 L10.72 -9.00 M14.55 -8.40 L13.16 -7.60 M15.79 -5.75 L13.16 -4.79 M16.54 -2.92 L14.97 -2.64 " stroke="#ffffff" stroke-width="0.9" opacity="0.8"/><g transform="rotate(46)"><path d="M0 -15.2 L2.5 0 L-2.5 0 Z" fill="#f5483b"/><path d="M0 15.2 L2.5 0 L-2.5 0 Z" fill="#f6f6f6"/></g></svg>
<div class="abs" style="left:1004px;top:1110px;width:230px;height:48px;border-radius:6px;background:#2e3343"></div>
<div class="abs" style="left:1020px;top:1126px;width:16px;height:16px;border-radius:4.5px;background:#ecedeb"></div>
<svg class="abs" style="left:1196.2px;top:1125.9px" width="22" height="16" viewBox="-11 -8 22 16" ><path d="M-7.6 -3.9 L0 3.7 L7.6 -3.9" stroke="#b0b5c8" stroke-width="2.9" stroke-linecap="round" stroke-linejoin="round" fill="none"/></svg>
<svg class="abs" style="left:1277.7px;top:1120.4px" width="21.5" height="23" viewBox="0 0 21.5 23" ><path d="M9.7 0.85 Q10.75 0.4 11.8 0.85 L19.8 3.9 Q21.2 4.5 21.2 6 V8.6 C21.2 14.6 17.3 19.4 10.75 22.5 C4.2 19.4 0.3 14.6 0.3 8.6 V6 Q0.3 4.5 1.7 3.9 Z" fill="#a6abc6"/></svg>
<div class="abs" style="left:1384px;top:1110px;width:88px;height:48px;border-radius:6px;background:#2e3343"></div>
<svg class="abs" style="left:1398px;top:1122.4px" width="28.5" height="22.5" viewBox="0 0 28.5 22.5" ><circle cx="6.6" cy="3.9" r="3.5" fill="#b0b5ca"/><circle cx="21.9" cy="3.9" r="3.5" fill="#b0b5ca"/><path d="M0 13.2 C0 10.4 2.6 8.6 6.2 8.6 C7.6 8.6 8.8 8.9 9.8 9.4 C8.2 10.6 7.2 12.2 6.9 14 H0.9 Q0 14 0 13.2 Z" fill="#b0b5ca"/><path d="M28.5 13.2 C28.5 10.4 25.9 8.6 22.3 8.6 C20.9 8.6 19.7 8.9 18.7 9.4 C20.3 10.6 21.3 12.2 21.6 14 H27.6 Q28.5 14 28.5 13.2 Z" fill="#b0b5ca"/><circle cx="14.25" cy="9.6" r="4.3" fill="#b0b5ca"/><path d="M5.9 20.6 C5.9 17.4 9.4 15.2 14.25 15.2 C19.1 15.2 22.6 17.4 22.6 20.6 V21.3 Q22.6 22.4 21.5 22.4 H7 Q5.9 22.4 5.9 21.3 Z" fill="#b0b5ca"/></svg>
<div class="abs" style="left:1514px;top:1110px;width:88px;height:48px;border-radius:6px;background:#2e3343"></div>
<svg class="abs" style="left:1530.6px;top:1121.6px" width="24.4" height="24.4" viewBox="-12.2 -12.2 24.4 24.4" ><circle cx="0" cy="0" r="11.2" fill="#b0b5ca"/><g fill="none" stroke="#2e3343" stroke-width="1.45"><ellipse cx="0" cy="0" rx="4.57" ry="12.00"/><path d="M-11.2 -3.64 H11.2 M-11.2 3.64 H11.2"/></g></svg>
<div class="txt">
<span class="t" style="left:170.10px;top:110.00px;font-size:21.5px;line-height:26px;color:#9ba3cd;letter-spacing:1.213px;-webkit-text-stroke:0.6px #9ba3cd;">Production</span>
<span class="t" style="left:162.10px;top:204.00px;font-size:21.5px;line-height:26px;color:#9ba3cd;letter-spacing:0.800px;-webkit-text-stroke:0.6px #9ba3cd;">Explorer</span>
<span class="t" style="left:162.10px;top:278.00px;font-size:21.5px;line-height:26px;color:#9ba3cd;letter-spacing:1.136px;-webkit-text-stroke:0.6px #9ba3cd;">Lists</span>
<span class="t" style="left:206.35px;top:354.00px;font-size:22px;line-height:26px;color:#636a8d;letter-spacing:-0.034px;-webkit-text-stroke:0.3px #636a8d;">Users in review</span>
<span class="t" style="left:206.35px;top:406.00px;font-size:22px;line-height:26px;color:#636a8d;letter-spacing:0.139px;-webkit-text-stroke:0.3px #636a8d;">Blocked Users</span>
<span class="t" style="left:206.35px;top:458.00px;font-size:22px;line-height:26px;color:#636a8d;letter-spacing:0.170px;-webkit-text-stroke:0.3px #636a8d;">Blocked Devices</span>
<span class="t" style="left:206.35px;top:510.00px;font-size:22px;line-height:26px;color:#636a8d;letter-spacing:-0.017px;-webkit-text-stroke:0.3px #636a8d;">Blocked IPs</span>
<span class="t" style="left:207.35px;top:562.00px;font-size:22px;line-height:26px;color:#636a8d;letter-spacing:0.184px;-webkit-text-stroke:0.3px #636a8d;">Allowed Countries</span>
<span class="t" style="left:207.35px;top:614.00px;font-size:22px;line-height:26px;color:#636a8d;letter-spacing:0.098px;-webkit-text-stroke:0.3px #636a8d;">Trusted Devices</span>
<span class="t" style="left:207.35px;top:666.00px;font-size:22px;line-height:26px;color:#636a8d;letter-spacing:-0.259px;-webkit-text-stroke:0.3px #636a8d;">ATO Reports</span>
<span class="t" style="left:165.10px;top:746.00px;font-size:21.5px;line-height:26px;color:#9ba3cd;letter-spacing:0.209px;-webkit-text-stroke:0.85px #9ba3cd;">Saved View</span>
<span class="t" style="left:212.10px;top:806.00px;font-size:22px;line-height:26px;color:#636a8d;letter-spacing:0.707px;-webkit-text-stroke:0.3px #636a8d;">Multi-accounters</span>
<span class="t" style="left:212.10px;top:858.00px;font-size:22px;line-height:26px;color:#636a8d;letter-spacing:-0.103px;-webkit-text-stroke:0.3px #636a8d;">Saved Devices</span>
<span class="t" style="left:211.10px;top:912.00px;font-size:22px;line-height:26px;color:#636a8d;letter-spacing:-0.158px;-webkit-text-stroke:0.3px #636a8d;">IP Addresses for Review</span>
<span class="t" style="left:212.10px;top:974.00px;font-size:22px;line-height:26px;color:#636a8d;letter-spacing:0.225px;-webkit-text-stroke:0.3px #636a8d;">High risk countries</span>
<span class="t" style="left:212.10px;top:1028.00px;font-size:22px;line-height:26px;color:#636a8d;letter-spacing:-0.748px;-webkit-text-stroke:0.3px #636a8d;">Show 11 More</span>
<span class="t" style="left:610.40px;top:139.00px;font-size:26.6px;line-height:32px;color:#ffffff;letter-spacing:0.815px;-webkit-text-stroke:0.65px #ffffff;">Find me all the devices connected to John Smith</span>
<span class="t" style="left:518.35px;top:240.00px;font-size:21.5px;line-height:26px;color:#c3caef;letter-spacing:0.473px;-webkit-text-stroke:0.6px #c3caef;">Group by</span>
<span class="t" style="left:644.10px;top:241.00px;font-size:20px;line-height:24px;color:#b5bff5;-webkit-text-stroke:0.8px #b5bff5;">Event  Name</span>
<span class="t" style="left:835.60px;top:241.00px;font-size:20px;line-height:24px;color:#8e97c5;letter-spacing:0.219px;-webkit-text-stroke:0.8px #8e97c5;">Device ID</span>
<span class="t" style="left:520.40px;top:324.00px;font-size:16.4px;line-height:20px;color:#a9b0cf;letter-spacing:1.351px;-webkit-text-stroke:0.55px #a9b0cf;">200K</span>
<span class="t" style="left:521.20px;top:448.00px;font-size:16.4px;line-height:20px;color:#a9b0cf;letter-spacing:0.818px;-webkit-text-stroke:0.55px #a9b0cf;">100K</span>
<span class="t" style="left:552.80px;top:587.00px;font-size:16.4px;line-height:20px;color:#a9b0cf;-webkit-text-stroke:0.55px #a9b0cf;">0</span>
<span class="t" style="left:606.20px;top:619.00px;font-size:16.2px;line-height:19px;color:#9095ad;letter-spacing:-0.006px;-webkit-text-stroke:0.55px #9095ad;">SAT 28</span>
<span class="t" style="left:986.85px;top:619.00px;font-size:16.2px;line-height:19px;color:#9095ad;letter-spacing:0.165px;-webkit-text-stroke:0.55px #9095ad;">SUN 29</span>
<span class="t" style="left:1370.10px;top:619.00px;font-size:16.2px;line-height:19px;color:#9095ad;letter-spacing:1.047px;-webkit-text-stroke:0.55px #9095ad;">MON 30</span>
<span class="t" style="left:640.35px;top:668.00px;font-size:21.5px;line-height:26px;color:#c3caef;letter-spacing:0.558px;-webkit-text-stroke:0.75px #c3caef;">Login Attempted (152)</span>
<span class="t" style="left:950.35px;top:668.00px;font-size:21.5px;line-height:26px;color:#c3caef;letter-spacing:0.489px;-webkit-text-stroke:0.75px #c3caef;">Login Succeeded (72)</span>
<span class="t" style="left:1274.10px;top:668.00px;font-size:21.5px;line-height:26px;color:#c3caef;letter-spacing:0.238px;-webkit-text-stroke:0.75px #c3caef;">Login Failed (72)</span>
<span class="t" style="left:1535.85px;top:668.00px;font-size:21.5px;line-height:26px;color:#c3caef;letter-spacing:0.646px;-webkit-text-stroke:0.75px #c3caef;">Other(</span>
<span class="t" style="left:570.10px;top:778.00px;font-size:21.5px;line-height:26px;color:#868eaf;letter-spacing:-0.114px;-webkit-text-stroke:0.8px #868eaf;">1,242 Events</span>
<span class="t" style="left:780.60px;top:778.00px;font-size:21.5px;line-height:26px;color:#ffffff;letter-spacing:0.481px;-webkit-text-stroke:0.8px #ffffff;">4 Devices</span>
<span class="t" style="left:1022.10px;top:778.00px;font-size:21.5px;line-height:26px;color:#868eaf;letter-spacing:0.284px;-webkit-text-stroke:0.8px #868eaf;">12,305 Users</span>
<span class="t" style="left:1278.35px;top:777.00px;font-size:21.5px;line-height:26px;color:#868eaf;letter-spacing:1.574px;-webkit-text-stroke:0.8px #868eaf;">More</span>
<span class="t" style="left:520.85px;top:851.00px;font-size:29px;line-height:35px;color:#ffffff;font-weight:700;letter-spacing:0.539px;">Devices</span>
<span class="t" style="left:522.10px;top:922.00px;font-size:21.5px;line-height:26px;color:#7c849d;letter-spacing:0.898px;-webkit-text-stroke:0.6px #7c849d;">Device</span>
<span class="t" style="left:852.10px;top:922.00px;font-size:21.5px;line-height:26px;color:#7c849d;letter-spacing:0.680px;-webkit-text-stroke:0.6px #7c849d;">Policy</span>
<span class="t" style="left:1004.10px;top:922.00px;font-size:21.5px;line-height:26px;color:#7c849d;letter-spacing:1.198px;-webkit-text-stroke:0.6px #7c849d;">Lists</span>
<span class="t" style="left:1284.10px;top:922.00px;font-size:21.5px;line-height:26px;color:#7c849d;letter-spacing:0.066px;-webkit-text-stroke:0.6px #7c849d;">Risk</span>
<span class="t" style="left:1382.10px;top:922.00px;font-size:21.5px;line-height:26px;color:#7c849d;letter-spacing:0.777px;-webkit-text-stroke:0.6px #7c849d;">Users</span>
<span class="t" style="left:1512.10px;top:922.00px;font-size:21.5px;line-height:26px;color:#7c849d;letter-spacing:0.093px;-webkit-text-stroke:0.6px #7c849d;">IPs</span>
<span class="t" style="left:595.85px;top:996.00px;font-size:21.5px;line-height:26px;color:#dee4ff;letter-spacing:0.179px;-webkit-text-stroke:0.85px #dee4ff;">Chrome on Mac OS X</span>
<span class="t" style="left:596.85px;top:1029.00px;font-size:16px;line-height:19px;color:#949ed6;letter-spacing:0.072px;-webkit-text-stroke:0.25px #949ed6;">Active 2 minutes ago</span>
<span class="t" style="left:852.10px;top:994.00px;font-size:21.5px;line-height:26px;color:#ffb570;letter-spacing:0.717px;-webkit-text-stroke:0.9px #ffb570;">Challenge</span>
<span class="t" style="left:852.40px;top:1027.00px;font-size:16px;line-height:19px;color:#9fa9de;letter-spacing:-0.052px;-webkit-text-stroke:0.3px #9fa9de;">Challenge pr...</span>
<span class="t" style="left:1050.35px;top:1009.00px;font-size:20px;line-height:24px;color:#bfc8f4;letter-spacing:0.419px;-webkit-text-stroke:0.7px #bfc8f4;">No lists</span>
<span class="t" style="left:1312.30px;top:1008.00px;font-size:23.4px;line-height:28px;color:#b5b9cc;letter-spacing:0.291px;-webkit-text-stroke:0.3px #b5b9cc;">24</span>
<span class="t" style="left:1442.60px;top:1010.00px;font-size:23.6px;line-height:28px;color:#b5b9cc;-webkit-text-stroke:0.4px #b5b9cc;">8</span>
<span class="t" style="left:1572.60px;top:1010.00px;font-size:23.6px;line-height:28px;color:#b5b9cc;-webkit-text-stroke:0.4px #b5b9cc;">8</span>
<span class="t" style="left:596.85px;top:1108.00px;font-size:21.5px;line-height:26px;color:#dee4ff;letter-spacing:0.020px;-webkit-text-stroke:0.85px #dee4ff;">Safari on Mac OS X</span>
<span class="t" style="left:596.85px;top:1141.00px;font-size:16px;line-height:19px;color:#949ed6;letter-spacing:0.072px;-webkit-text-stroke:0.25px #949ed6;">Active 2 minutes ago</span>
<span class="t" style="left:852.10px;top:1106.00px;font-size:21.5px;line-height:26px;color:#ff6f6f;letter-spacing:0.770px;-webkit-text-stroke:0.9px #ff6f6f;">Deny</span>
<span class="t" style="left:851.40px;top:1139.00px;font-size:16px;line-height:19px;color:#9fa9de;letter-spacing:-0.055px;-webkit-text-stroke:0.3px #9fa9de;">Deny Blocke...</span>
<span class="t" style="left:1050.35px;top:1121.00px;font-size:20px;line-height:24px;color:#bfc8f4;letter-spacing:0.419px;-webkit-text-stroke:0.7px #bfc8f4;">No lists</span>
<span class="t" style="left:1312.30px;top:1120.00px;font-size:23.4px;line-height:28px;color:#b5b9cc;letter-spacing:0.291px;-webkit-text-stroke:0.3px #b5b9cc;">24</span>
<span class="t" style="left:1442.60px;top:1122.00px;font-size:23.6px;line-height:28px;color:#b5b9cc;-webkit-text-stroke:0.4px #b5b9cc;">8</span>
<span class="t" style="left:1572.60px;top:1122.00px;font-size:23.6px;line-height:28px;color:#b5b9cc;-webkit-text-stroke:0.4px #b5b9cc;">8</span>
</div>
</body>
</html>
